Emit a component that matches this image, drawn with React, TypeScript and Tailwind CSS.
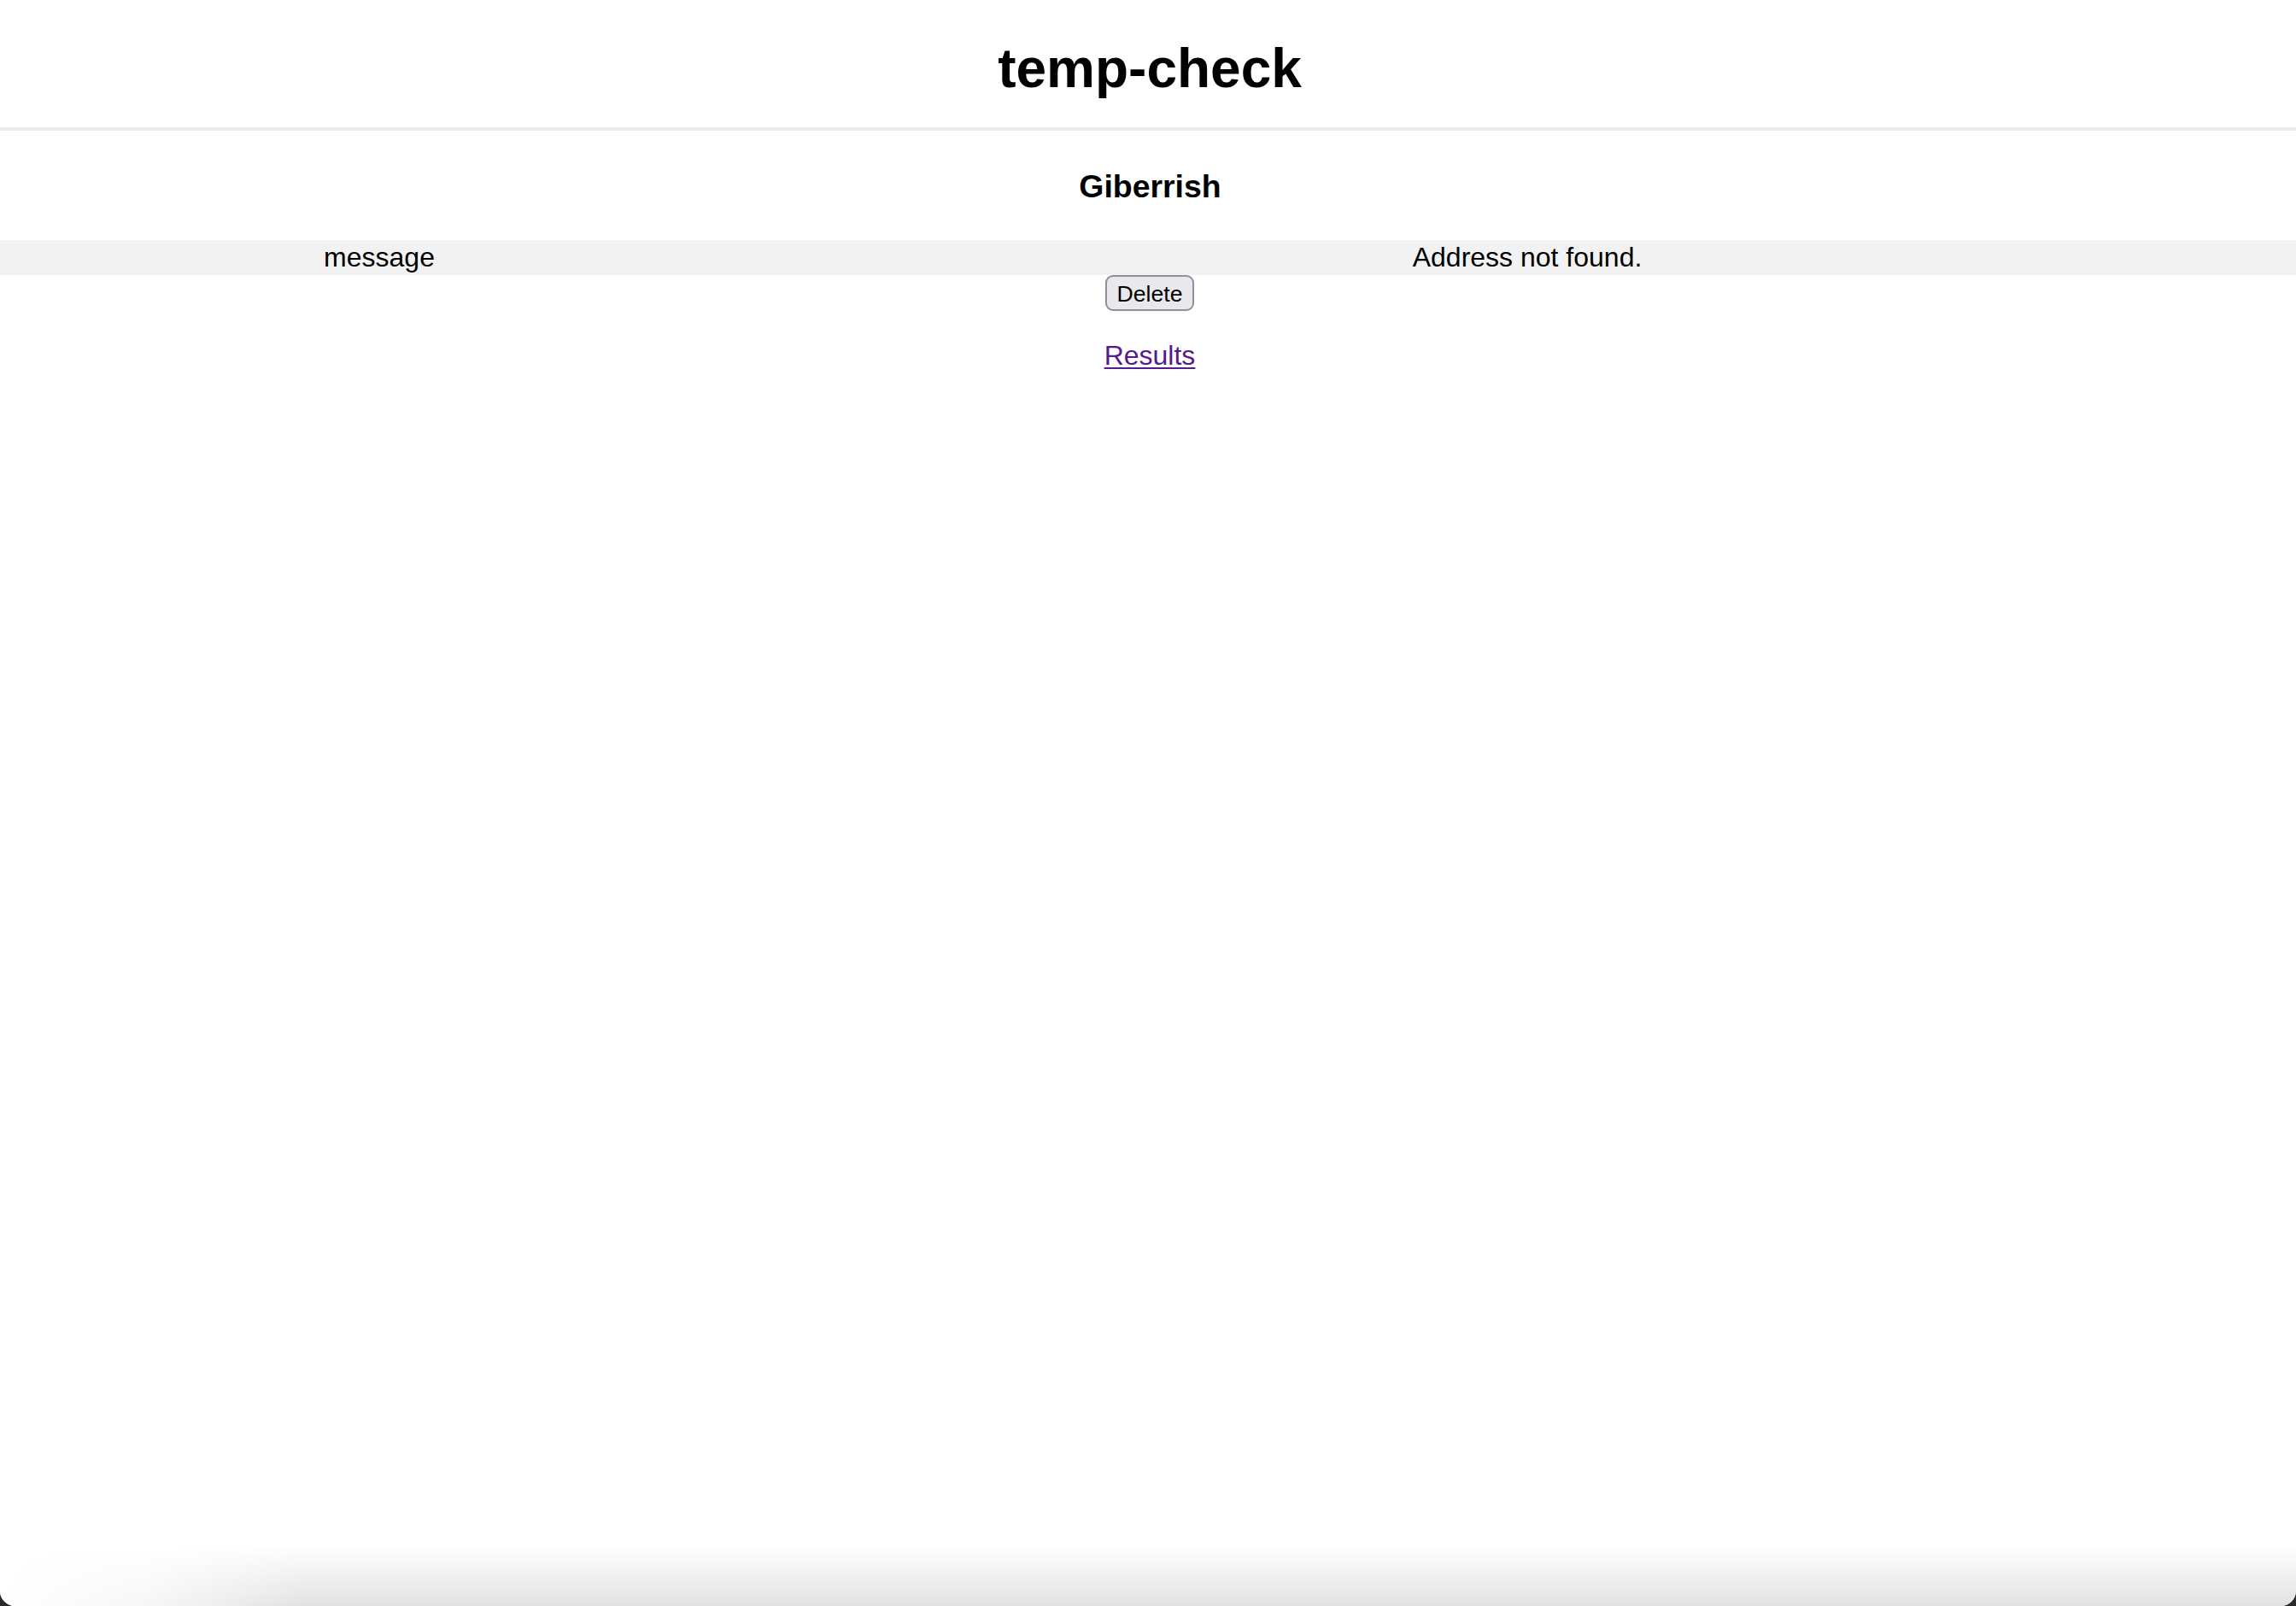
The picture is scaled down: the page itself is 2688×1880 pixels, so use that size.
import React from 'react';

const rows = [{ key: 'message', value: 'Address not found.' }];

export default function App() {
  return (
    <div className="bg-[#2b2b2b] w-[2688px] h-[1880px] font-['Liberation_Sans',Arial,sans-serif] text-black">
      <div className="relative bg-white h-full rounded-b-[18px] overflow-hidden flex flex-col">
        {/* Header */}
        <header className="pt-[43px] pb-[32px] border-b-[4px] border-[#ebebeb]">
          <h1 className="pl-[4px] text-center text-[64px] leading-[74px] font-bold">temp-check</h1>
        </header>

        {/* Result */}
        <h3 className="pl-[5px] mt-[44px] text-center text-[37.44px] leading-[43px] font-bold">Giberrish</h3>

        <div className="mt-[41px]">
          {rows.map((row) => (
            <div key={row.key} className="flex bg-[#f2f2f2] text-[32px] leading-[41px]">
              <div className="w-[888px] text-center">{row.key}</div>
              <div className="flex-1 text-center">{row.value}</div>
            </div>
          ))}
        </div>

        <div className="flex justify-center">
          <button className="ml-[4px] w-[104px] h-[42px] pt-[2px] bg-[#e9e9ed] border-[2px] border-[#8f8f9d] rounded-[9px] text-[26.67px] leading-[30px] text-black">
            Delete
          </button>
        </div>

        <div className="pl-[4px] mt-[34px] flex justify-center">
          <a href="#" className="text-[32px] leading-[37px] text-[#551a8b] underline underline-offset-[3px] decoration-[2px]">
            Results
          </a>
        </div>

        {/* window shadow at bottom edge */}
        <div className="mt-auto h-[70px] bg-gradient-to-b from-white to-[#e2e2e2]" />
        <div className="absolute left-0 bottom-0 w-[360px] h-[70px] bg-gradient-to-r from-white via-white/70 to-transparent" />
      </div>
    </div>
  );
}
